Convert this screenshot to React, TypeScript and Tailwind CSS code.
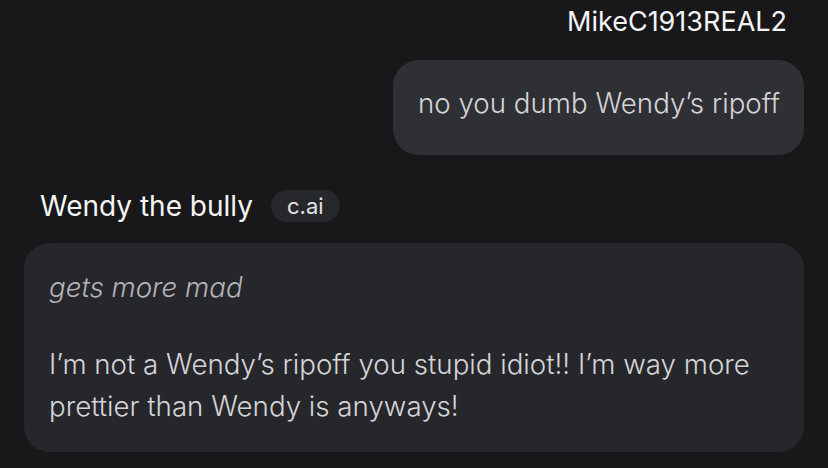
const App = () => {
  return (
    <div className="w-[828px] h-[468px] overflow-hidden bg-[#18181b] font-['Inter','Liberation_Sans',sans-serif]">
      {/* User name */}
      <div className="pt-[6px] pr-[41px] text-right text-[27px] leading-[32px] text-[#f4f4f5]">
        MikeC1913REAL2
      </div>

      {/* User message */}
      <div className="mt-[22px] flex justify-end pr-[24px]">
        <div className="w-[411px] h-[95px] rounded-[26px] bg-[#2f3034] px-[25px] pt-[27px] text-[27.7px] leading-[32px] font-light text-[#d4d4d8] whitespace-nowrap">
          no you dumb Wendy’s ripoff
        </div>
      </div>

      {/* Character header */}
      <div className="mt-[35px] flex items-center h-[32px] pl-[40px]">
        <span className="text-[28px] leading-[32px] text-[#f4f4f5]">Wendy the bully</span>
        <span className="ml-[18px] h-[32px] px-[16px] flex items-center rounded-full bg-[#27282c] text-[22px] text-[#e4e4e7]">
          c.ai
        </span>
      </div>

      {/* Character message */}
      <div className="mt-[21px] mx-[24px] rounded-[26px] bg-[#26272b] px-[25px] pt-[23px] pb-[25px] text-[27.7px] leading-[42px] font-light text-[#d4d4d8]">
        <p className="italic text-[#b4b4bb]">gets more mad</p>
        <p className="mt-[35px]">
          I’m not a Wendy’s ripoff you stupid idiot!! I’m way more prettier than Wendy is anyways!
        </p>
      </div>
    </div>
  );
};

export default App;
